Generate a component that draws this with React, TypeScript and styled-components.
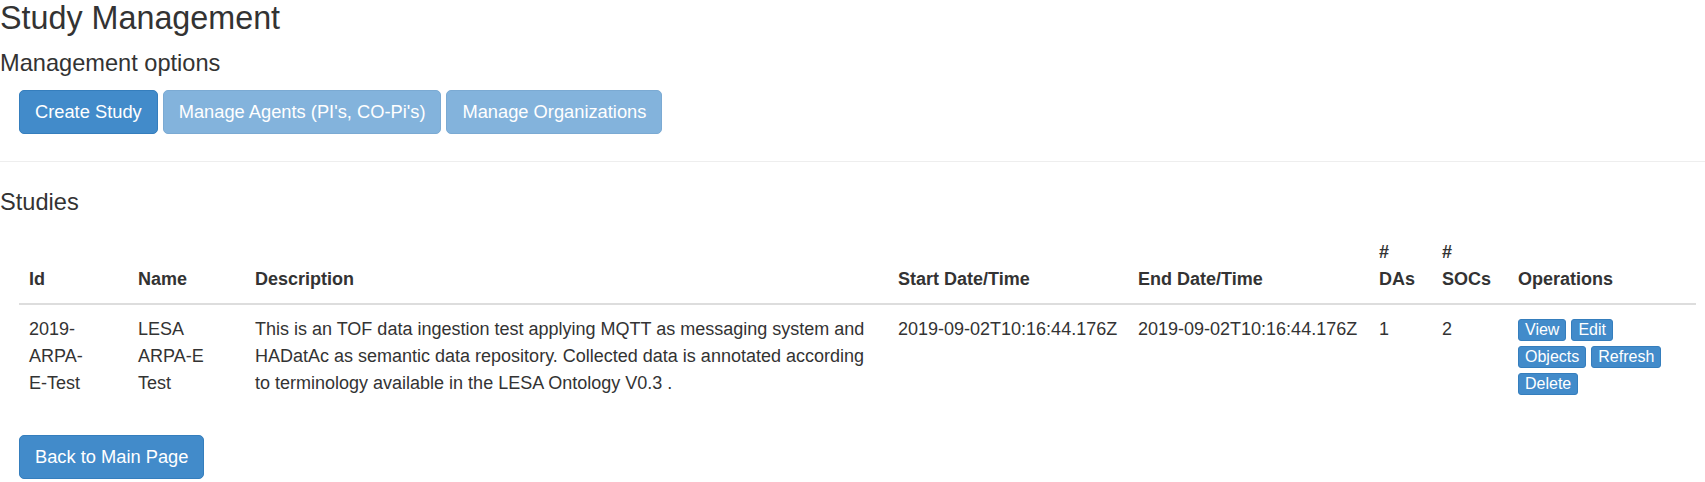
import React from "react";
import styled, { createGlobalStyle } from "styled-components";

const GlobalStyle = createGlobalStyle`
  html, body {
    margin: 0;
    padding: 0;
    background: #ffffff;
  }
  body {
    font-family: "Liberation Sans", Arial, Helvetica, sans-serif;
    font-size: 18px;
    line-height: 27px;
    color: #333333;
  }
  * { box-sizing: border-box; }
`;

const Page = styled.div`
  width: 1705px;
  display: flex;
  flex-direction: column;
`;

const Title = styled.h1`
  margin: 0;
  font-size: 32.3px;
  line-height: 36px;
  font-weight: 400;
  color: #333333;
`;

const SubTitle = styled.h3<{ $top: number }>`
  margin: ${(p) => p.$top}px 0 0 0;
  font-size: 23.6px;
  line-height: 28px;
  font-weight: 400;
  color: #333333;
`;

const Indented = styled.div<{ $top: number }>`
  margin-top: ${(p) => p.$top}px;
  padding: 0 9px 0 19px;
  display: flex;
  gap: 5px;
  align-items: flex-start;
`;

const BigButton = styled.button<{ $disabled?: boolean }>`
  font-family: inherit;
  font-size: 18.3px;
  line-height: 22px;
  padding: 10px 15px;
  border-radius: 5px;
  border: 1px solid #357ebd;
  background: #428bca;
  color: #ffffff;
  cursor: pointer;
  opacity: ${(p) => (p.$disabled ? 0.65 : 1)};
  white-space: nowrap;
`;

const Divider = styled.hr`
  margin: 27px 0 0 0;
  border: 0;
  border-top: 1px solid #eeeeee;
  height: 0;
`;

const Table = styled.table`
  width: 1677px;
  table-layout: fixed;
  border-collapse: collapse;
  border-spacing: 0;
`;

const HeadCell = styled.th<{ $w: number }>`
  width: ${(p) => p.$w}px;
  text-align: left;
  vertical-align: bottom;
  font-weight: 700;
  padding: 10px;
  border-bottom: 2px solid #dddddd;
  line-height: 27px;
`;

const Cell = styled.td<{ $nowrap?: boolean }>`
  vertical-align: top;
  padding: 11px 10px 10px 10px;
  line-height: 27px;
  white-space: ${(p) => (p.$nowrap ? "nowrap" : "normal")};
`;

const IdText = styled.span`
  display: block;
  max-width: 64px;
`;

const OpsGroup = styled.div`
  display: flex;
  flex-wrap: wrap;
  gap: 5px;
  padding-top: 3px;
  max-width: 160px;
`;

const SmallButton = styled.button`
  font-family: inherit;
  font-size: 16px;
  line-height: 20px;
  height: 22px;
  padding: 0 6px;
  border-radius: 3px;
  border: 1px solid #357ebd;
  background: #428bca;
  color: #ffffff;
  cursor: pointer;
  white-space: nowrap;
`;

const columns: { label: React.ReactNode; w: number }[] = [
  { label: "Id", w: 109 },
  { label: "Name", w: 117 },
  { label: "Description", w: 643 },
  { label: "Start Date/Time", w: 240 },
  { label: "End Date/Time", w: 241 },
  { label: "# DAs", w: 63 },
  { label: "# SOCs", w: 76 },
  { label: "Operations", w: 188 },
];

export default function App() {
  return (
    <>
      <GlobalStyle />
      <Page>
        <Title>Study Management</Title>
        <SubTitle $top={13}>Management options</SubTitle>
        <Indented $top={13}>
          <BigButton>Create Study</BigButton>
          <BigButton $disabled>Manage Agents (PI's, CO-Pi's)</BigButton>
          <BigButton $disabled>Manage Organizations</BigButton>
        </Indented>
        <Divider />
        <SubTitle $top={26}>Studies</SubTitle>
        <Indented $top={13}>
          <Table>
            <thead>
              <tr>
                {columns.map((c, i) => (
                  <HeadCell key={i} $w={c.w}>
                    {c.label}
                  </HeadCell>
                ))}
              </tr>
            </thead>
            <tbody>
              <tr>
                <Cell>
                  <IdText>2019-ARPA-E-Test</IdText>
                </Cell>
                <Cell>LESA ARPA-E Test</Cell>
                <Cell>
                  This is an TOF data ingestion test applying MQTT as messaging
                  system and HADatAc as semantic data repository. Collected data
                  is annotated according to terminology available in the LESA
                  Ontology V0.3 .
                </Cell>
                <Cell $nowrap>2019-09-02T10:16:44.176Z</Cell>
                <Cell $nowrap>2019-09-02T10:16:44.176Z</Cell>
                <Cell>1</Cell>
                <Cell>2</Cell>
                <Cell>
                  <OpsGroup>
                    <SmallButton>View</SmallButton>
                    <SmallButton>Edit</SmallButton>
                    <SmallButton>Objects</SmallButton>
                    <SmallButton>Refresh</SmallButton>
                    <SmallButton>Delete</SmallButton>
                  </OpsGroup>
                </Cell>
              </tr>
            </tbody>
          </Table>
        </Indented>
        <Indented $top={28}>
          <BigButton>Back to Main Page</BigButton>
        </Indented>
      </Page>
    </>
  );
}
